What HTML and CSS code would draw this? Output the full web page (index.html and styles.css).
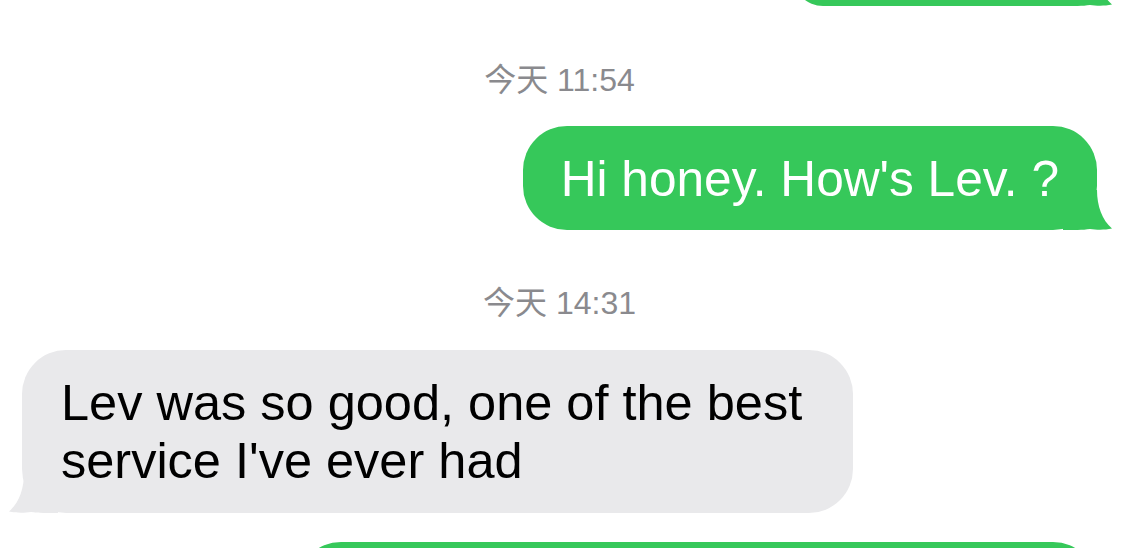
FILE: index.html
```html
<!DOCTYPE html>
<html lang="zh">
<head>
<meta charset="utf-8">
<title>Messages</title>
<link rel="stylesheet" href="styles.css">
</head>
<body>
<main class="thread">
  <div class="bubble sent bubble-top">
    <svg class="tail" viewBox="0 0 50 40" aria-hidden="true"><path d="M0 0 H34 C34 16 39 30 49 38.5 C41 40.2 33 39.8 27 38.9 C20 40 10 40 0 40 Z"/></svg>
  </div>

  <div class="stamp">今天 11:54</div>

  <div class="bubble sent">
    <span class="msg">Hi honey. How's Lev. ?</span>
    <svg class="tail" viewBox="0 0 50 40" aria-hidden="true"><path d="M0 0 H34 C34 16 39 30 49 38.5 C41 40.2 33 39.8 27 38.9 C20 40 10 40 0 40 Z"/></svg>
  </div>

  <div class="stamp">今天 14:31</div>

  <div class="bubble received">
    <span class="msg">Lev was so good, one of the best service I've ever had</span>
    <svg class="tail" viewBox="0 0 50 40" aria-hidden="true"><path d="M0 0 H34 C34 16 39 30 49 38.5 C41 40.2 33 39.8 27 38.9 C20 40 10 40 0 40 Z"/></svg>
  </div>

  <div class="bubble sent bubble-bottom"></div>
</main>
</body>
</html>
```

FILE: styles.css
```css
html, body {
  margin: 0;
  padding: 0;
  background: #ffffff;
  overflow: hidden;
}

body {
  width: 1122px;
  height: 548px;
  font-family: "Liberation Sans", Arial, "Noto Sans CJK SC", sans-serif;
}

.thread {
  display: flex;
  flex-direction: column;
  padding: 0 25px 0 22px;
  height: 548px;
  overflow: hidden;
}

.bubble {
  position: relative;
  border-radius: 44px;
  box-sizing: border-box;
  flex-shrink: 0;
}

.bubble .msg {
  display: block;
  position: relative;
  z-index: 1;
}

.sent {
  align-self: flex-end;
  background: #36c85a;
  color: #ffffff;
  font-size: 49.6px;
  line-height: 58px;
  padding: 24px 38px 22px 38px;
  margin-top: 28px;
}

.sent .tail {
  fill: #36c85a;
}

.received {
  align-self: flex-start;
  background: #e9e9eb;
  color: #000000;
  font-size: 50.5px;
  line-height: 58px;
  padding: 24px 38px 23px 39px;
  margin-top: 29px;
  max-width: 831px;
}

.received .tail {
  fill: #e9e9eb;
}

.tail {
  position: absolute;
  bottom: 0;
  width: 50px;
  height: 40px;
}

.sent .tail {
  right: -16px;
}

.received .tail {
  left: -14px;
  transform: scaleX(-1);
}

.bubble-top {
  width: 304px;
  height: 60px;
  padding: 0;
  margin-top: -54px;
}

.bubble-bottom {
  width: 800px;
  height: 100px;
  padding: 0;
  margin-top: 29px;
}

.stamp {
  align-self: center;
  font-family: "Liberation Sans", Arial, "Noto Sans CJK SC", sans-serif;
  font-size: 32px;
  line-height: 36px;
  color: #8a8a8e;
  margin-top: 55px;
}

.bubble-top + .stamp {
  margin-top: 56px;
}
```
